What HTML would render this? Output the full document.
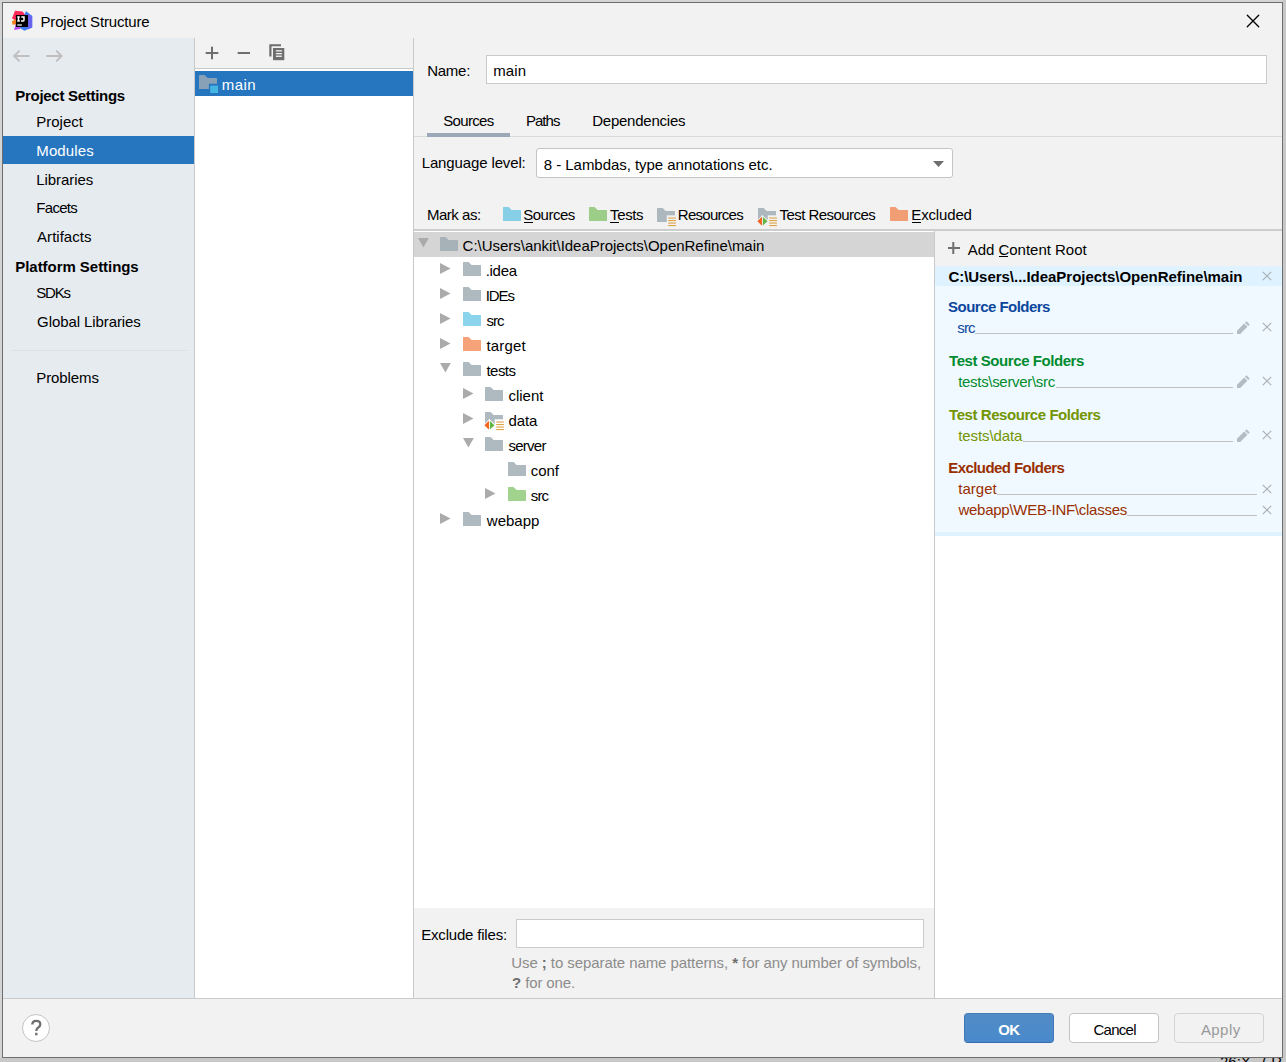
<!DOCTYPE html>
<html><head><meta charset="utf-8">
<style>
html,body{margin:0;padding:0;width:1286px;height:1062px;overflow:hidden;background:#d2d2d2;}
body{position:relative;font-family:"Liberation Sans",sans-serif;font-size:15px;}
.a{position:absolute;box-sizing:border-box;}
.t{position:absolute;white-space:nowrap;line-height:20px;font-size:15px;font-family:"Liberation Sans",sans-serif;}
svg{position:absolute;overflow:visible;}
.t b{color:#6e6e6e;}
</style></head><body>
<!-- backdrop -->
<div class="a" style="left:0;top:0;width:1286px;height:1062px;background:#d4d4d4"></div>
<div class="a" style="left:1283px;top:0;width:3px;height:1062px;background:#c8c8c8"></div>
<div class="a" style="left:0;top:1058px;width:1286px;height:4px;background:#c8c8c8"></div>
<div class="a" style="left:1200px;top:1057px;width:83px;height:5px;overflow:hidden"><div class="t" style="left:20px;top:-5px;color:#000;font-size:15px">26:X</div><div class="t" style="left:62px;top:-5px;color:#000;font-size:15px">( RI</div></div>
<!-- window -->
<div class="a" style="left:2px;top:2px;width:1281px;height:1056px;border:1px solid #6e6e6e;background:#f2f2f2"></div>
<!-- sidebar -->
<div class="a" style="left:3px;top:38px;width:191px;height:960px;background:#e6ebf0"></div>
<div class="a" style="left:194px;top:38px;width:1px;height:960px;background:#c9c9c9"></div>
<div class="a" style="left:3px;top:136px;width:191px;height:28px;background:#2675bf"></div>
<div class="a" style="left:12px;top:350px;width:175px;height:1px;background:#dcdfe3"></div>
<!-- middle -->
<div class="a" style="left:195px;top:38px;width:218px;height:30px;background:#f2f2f2"></div>
<div class="a" style="left:195px;top:68px;width:218px;height:1px;background:#c9c9c9"></div>
<div class="a" style="left:195px;top:69px;width:218px;height:929px;background:#fff"></div>
<div class="a" style="left:195px;top:71px;width:218px;height:25px;background:#2675bf"></div>
<div class="a" style="left:413px;top:38px;width:1px;height:960px;background:#c9c9c9"></div>
<!-- bottom separator -->
<div class="a" style="left:3px;top:998px;width:1279px;height:1px;background:#c9c9c9"></div>

<!-- name field -->
<div class="a" style="left:486px;top:55px;width:781px;height:29px;background:#fff;border:1px solid #cbcbcb"></div>
<!-- tabs -->
<div class="a" style="left:414px;top:136px;width:868px;height:1px;background:#d9d9d9"></div>
<div class="a" style="left:427px;top:133px;width:83px;height:4px;background:#9ca7b8"></div>
<!-- combo -->
<div class="a" style="left:536px;top:148px;width:417px;height:30px;background:#fff;border:1px solid #c4c4c4;border-radius:3px"></div>
<svg style="left:933px;top:161px" width="11" height="6"><polygon points="0,0 11,0 5.5,6" fill="#6e6e6e"/></svg>
<!-- mark-as line -->
<div class="a" style="left:414px;top:229px;width:868px;height:2px;background:#cdcdcd"></div>
<!-- tree -->
<div class="a" style="left:414px;top:231px;width:520px;height:677px;background:#fff"></div>
<div class="a" style="left:414px;top:232px;width:520px;height:25px;background:#d5d5d5"></div>
<div class="a" style="left:414px;top:908px;width:520px;height:90px;background:#f2f2f2"></div>
<div class="a" style="left:516px;top:919px;width:408px;height:29px;background:#fff;border:1px solid #cbcbcb"></div>
<div class="a" style="left:934px;top:231px;width:1px;height:767px;background:#c9c9c9"></div>
<!-- right pane -->
<div class="a" style="left:935px;top:231px;width:347px;height:767px;background:#fff"></div>
<div class="a" style="left:935px;top:231px;width:347px;height:35px;background:#f2f2f2"></div>
<div class="a" style="left:935px;top:266px;width:347px;height:20px;background:#def2ff"></div>
<div class="a" style="left:935px;top:286px;width:347px;height:246px;background:#f0f9ff"></div>
<div class="a" style="left:935px;top:532px;width:347px;height:4px;background:#def2ff"></div>

<!-- buttons -->
<div class="a" style="left:22px;top:1014px;width:28px;height:28px;border-radius:50%;background:#fff;border:1px solid #c4c4c4"></div>
<div class="a" style="left:964px;top:1013px;width:90px;height:30px;border-radius:4px;background:linear-gradient(#528cc7,#4989cc);border:1px solid #4078b5;border-top-color:#487eb8;border-bottom-color:#346dad"></div>
<div class="a" style="left:1069px;top:1013px;width:90px;height:30px;border-radius:4px;background:#fff;border:1px solid #c4c4c4"></div>
<div class="a" style="left:1174px;top:1013px;width:90px;height:30px;border-radius:4px;background:#f2f2f2;border:1px solid #d3d3d3"></div>

<svg style="left:418.3px;top:238px" width="11" height="10" viewBox="0 0 11 10"><polygon points="0,0 10.8,0 5.4,9.5" fill="#ababab"/></svg>
<svg style="left:440.1px;top:237px" width="18" height="14" viewBox="0 0 18 14"><path d="M0,0.6 Q0,0 0.6,0 H5.6 L8.6,3 H17.4 Q18,3 18,3.6 V13.4 Q18,14 17.4,14 H0.6 Q0,14 0,13.4 Z" fill="rgba(154,167,176,0.8)"/></svg>
<svg style="left:440.1px;top:263px" width="11" height="11" viewBox="0 0 11 11"><polygon points="0,0 10.5,5.5 0,11" fill="#ababab"/></svg>
<svg style="left:463.1px;top:262px" width="18" height="14" viewBox="0 0 18 14"><path d="M0,0.6 Q0,0 0.6,0 H5.6 L8.6,3 H17.4 Q18,3 18,3.6 V13.4 Q18,14 17.4,14 H0.6 Q0,14 0,13.4 Z" fill="rgba(154,167,176,0.8)"/></svg>
<svg style="left:440.1px;top:288px" width="11" height="11" viewBox="0 0 11 11"><polygon points="0,0 10.5,5.5 0,11" fill="#ababab"/></svg>
<svg style="left:463.1px;top:287px" width="18" height="14" viewBox="0 0 18 14"><path d="M0,0.6 Q0,0 0.6,0 H5.6 L8.6,3 H17.4 Q18,3 18,3.6 V13.4 Q18,14 17.4,14 H0.6 Q0,14 0,13.4 Z" fill="rgba(154,167,176,0.8)"/></svg>
<svg style="left:440.1px;top:313px" width="11" height="11" viewBox="0 0 11 11"><polygon points="0,0 10.5,5.5 0,11" fill="#ababab"/></svg>
<svg style="left:463.1px;top:312px" width="18" height="14" viewBox="0 0 18 14"><path d="M0,0.6 Q0,0 0.6,0 H5.6 L8.6,3 H17.4 Q18,3 18,3.6 V13.4 Q18,14 17.4,14 H0.6 Q0,14 0,13.4 Z" fill="rgba(64,182,224,0.6)"/></svg>
<svg style="left:440.1px;top:338px" width="11" height="11" viewBox="0 0 11 11"><polygon points="0,0 10.5,5.5 0,11" fill="#ababab"/></svg>
<svg style="left:463.1px;top:337px" width="18" height="14" viewBox="0 0 18 14"><path d="M0,0.6 Q0,0 0.6,0 H5.6 L8.6,3 H17.4 Q18,3 18,3.6 V13.4 Q18,14 17.4,14 H0.6 Q0,14 0,13.4 Z" fill="rgba(242,101,34,0.6)"/></svg>
<svg style="left:440.4px;top:363px" width="11" height="10" viewBox="0 0 11 10"><polygon points="0,0 10.8,0 5.4,9.5" fill="#ababab"/></svg>
<svg style="left:463.1px;top:362px" width="18" height="14" viewBox="0 0 18 14"><path d="M0,0.6 Q0,0 0.6,0 H5.6 L8.6,3 H17.4 Q18,3 18,3.6 V13.4 Q18,14 17.4,14 H0.6 Q0,14 0,13.4 Z" fill="rgba(154,167,176,0.8)"/></svg>
<svg style="left:463px;top:388px" width="11" height="11" viewBox="0 0 11 11"><polygon points="0,0 10.5,5.5 0,11" fill="#ababab"/></svg>
<svg style="left:485.1px;top:387px" width="18" height="14" viewBox="0 0 18 14"><path d="M0,0.6 Q0,0 0.6,0 H5.6 L8.6,3 H17.4 Q18,3 18,3.6 V13.4 Q18,14 17.4,14 H0.6 Q0,14 0,13.4 Z" fill="rgba(154,167,176,0.8)"/></svg>
<svg style="left:463px;top:413px" width="11" height="11" viewBox="0 0 11 11"><polygon points="0,0 10.5,5.5 0,11" fill="#ababab"/></svg>
<svg style="left:485.1px;top:412px" width="22" height="20" viewBox="0 0 22 20"><path d="M0,0.6 Q0,0 0.6,0 H5.6 L8.6,3 H17.4 Q18,3 18,3.6 V13.4 Q18,14 17.4,14 H0.6 Q0,14 0,13.4 Z" fill="rgba(154,167,176,0.8)"/><rect x="9.7" y="7.3" width="12" height="13" fill="#fff"/><polygon points="-0.4,13.25 3.9,9.1 3.9,17.4" fill="#f26522" stroke="#fff" stroke-width="2" paint-order="stroke" stroke-linejoin="miter"/><polygon points="4.9,9.1 9.5,13.25 4.9,17.4" fill="#62b543" stroke="#fff" stroke-width="2" paint-order="stroke"/><polygon points="-0.4,13.25 3.9,9.1 3.9,17.4" fill="#f26522"/><rect x="11.2" y="9.5" width="7.7" height="1.1" fill="#dea448"/><rect x="11.2" y="12.0" width="7.7" height="1.1" fill="#dea448"/><rect x="11.2" y="14.5" width="7.7" height="1.1" fill="#dea448"/><rect x="11.2" y="17.0" width="7.7" height="1.1" fill="#dea448"/></svg>
<svg style="left:463px;top:438px" width="11" height="10" viewBox="0 0 11 10"><polygon points="0,0 10.8,0 5.4,9.5" fill="#ababab"/></svg>
<svg style="left:485.1px;top:437px" width="18" height="14" viewBox="0 0 18 14"><path d="M0,0.6 Q0,0 0.6,0 H5.6 L8.6,3 H17.4 Q18,3 18,3.6 V13.4 Q18,14 17.4,14 H0.6 Q0,14 0,13.4 Z" fill="rgba(154,167,176,0.8)"/></svg>
<svg style="left:508px;top:462px" width="18" height="14" viewBox="0 0 18 14"><path d="M0,0.6 Q0,0 0.6,0 H5.6 L8.6,3 H17.4 Q18,3 18,3.6 V13.4 Q18,14 17.4,14 H0.6 Q0,14 0,13.4 Z" fill="rgba(154,167,176,0.8)"/></svg>
<svg style="left:485.3px;top:488px" width="11" height="11" viewBox="0 0 11 11"><polygon points="0,0 10.5,5.5 0,11" fill="#ababab"/></svg>
<svg style="left:508px;top:487px" width="18" height="14" viewBox="0 0 18 14"><path d="M0,0.6 Q0,0 0.6,0 H5.6 L8.6,3 H17.4 Q18,3 18,3.6 V13.4 Q18,14 17.4,14 H0.6 Q0,14 0,13.4 Z" fill="rgba(98,181,67,0.6)"/></svg>
<svg style="left:440.1px;top:513px" width="11" height="11" viewBox="0 0 11 11"><polygon points="0,0 10.5,5.5 0,11" fill="#ababab"/></svg>
<svg style="left:463.1px;top:512px" width="18" height="14" viewBox="0 0 18 14"><path d="M0,0.6 Q0,0 0.6,0 H5.6 L8.6,3 H17.4 Q18,3 18,3.6 V13.4 Q18,14 17.4,14 H0.6 Q0,14 0,13.4 Z" fill="rgba(154,167,176,0.8)"/></svg>
<svg style="left:503px;top:207px" width="18" height="14" viewBox="0 0 18 14"><path d="M0,0.6 Q0,0 0.6,0 H5.6 L8.6,3 H17.4 Q18,3 18,3.6 V13.4 Q18,14 17.4,14 H0.6 Q0,14 0,13.4 Z" fill="rgba(64,182,224,0.6)"/></svg>
<svg style="left:589px;top:207px" width="18" height="14" viewBox="0 0 18 14"><path d="M0,0.6 Q0,0 0.6,0 H5.6 L8.6,3 H17.4 Q18,3 18,3.6 V13.4 Q18,14 17.4,14 H0.6 Q0,14 0,13.4 Z" fill="rgba(98,181,67,0.6)"/></svg>
<svg style="left:657px;top:207.5px" width="22" height="20" viewBox="0 0 22 20"><path d="M0,0.6 Q0,0 0.6,0 H5.6 L8.6,3 H17.4 Q18,3 18,3.6 V13.4 Q18,14 17.4,14 H0.6 Q0,14 0,13.4 Z" fill="rgba(154,167,176,0.8)"/><rect x="9.7" y="7.3" width="12" height="13" fill="#f2f2f2"/><rect x="11.2" y="9.5" width="7.7" height="1.1" fill="#dea448"/><rect x="11.2" y="12.0" width="7.7" height="1.1" fill="#dea448"/><rect x="11.2" y="14.5" width="7.7" height="1.1" fill="#dea448"/><rect x="11.2" y="17.0" width="7.7" height="1.1" fill="#dea448"/></svg>
<svg style="left:758px;top:207.5px" width="22" height="20" viewBox="0 0 22 20"><path d="M0,0.6 Q0,0 0.6,0 H5.6 L8.6,3 H17.4 Q18,3 18,3.6 V13.4 Q18,14 17.4,14 H0.6 Q0,14 0,13.4 Z" fill="rgba(154,167,176,0.8)"/><rect x="9.7" y="7.3" width="12" height="13" fill="#f2f2f2"/><polygon points="-0.4,13.25 3.9,9.1 3.9,17.4" fill="#f26522" stroke="#f2f2f2" stroke-width="2" paint-order="stroke" stroke-linejoin="miter"/><polygon points="4.9,9.1 9.5,13.25 4.9,17.4" fill="#62b543" stroke="#f2f2f2" stroke-width="2" paint-order="stroke"/><polygon points="-0.4,13.25 3.9,9.1 3.9,17.4" fill="#f26522"/><rect x="11.2" y="9.5" width="7.7" height="1.1" fill="#dea448"/><rect x="11.2" y="12.0" width="7.7" height="1.1" fill="#dea448"/><rect x="11.2" y="14.5" width="7.7" height="1.1" fill="#dea448"/><rect x="11.2" y="17.0" width="7.7" height="1.1" fill="#dea448"/></svg>
<svg style="left:890px;top:207px" width="18" height="14" viewBox="0 0 18 14"><path d="M0,0.6 Q0,0 0.6,0 H5.6 L8.6,3 H17.4 Q18,3 18,3.6 V13.4 Q18,14 17.4,14 H0.6 Q0,14 0,13.4 Z" fill="rgba(242,101,34,0.6)"/></svg>
<div class="a" style="left:524px;top:222px;width:9px;height:1px;background:#000"></div>
<div class="a" style="left:610px;top:222px;width:9px;height:1px;background:#000"></div>
<div class="a" style="left:912px;top:222px;width:9px;height:1px;background:#000"></div>
<div class="a" style="left:999px;top:256px;width:9px;height:1px;background:#000"></div>
<svg style="left:199px;top:75px" width="20" height="19" viewBox="0 0 20 19"><path d="M0,0.6 Q0,0 0.6,0 H5.6 L8.6,3 H17.4 Q18,3 18,3.6 V8.8 H9.9 V14 H0.6 Q0,14 0,13.4 Z" fill="#88a1b6"/><rect x="11.2" y="10.6" width="7.8" height="7.4" fill="#45b5e2"/></svg>
<svg style="left:205px;top:46px" width="14" height="14" viewBox="0 0 14 14"><rect x="6" y="0.7" width="2" height="12.6" fill="#6e6e6e"/><rect x="0.7" y="6" width="12.6" height="2" fill="#6e6e6e"/></svg>
<svg style="left:237px;top:46px" width="14" height="14" viewBox="0 0 14 14"><rect x="0.7" y="6" width="12.3" height="2" fill="#6e6e6e"/></svg>
<svg style="left:268px;top:43px" width="18" height="19" viewBox="0 0 18 19"><path d="M1.3,1.2 H13 V3.3 H3.5 V13.5 H1.3 Z" fill="#6e6e6e"/><rect x="5" y="5" width="11.3" height="12.2" fill="#6e6e6e"/><rect x="7.9" y="7.2" width="6" height="1.3" fill="#f2f2f2"/><rect x="7.9" y="10" width="6" height="1.3" fill="#f2f2f2"/><rect x="7.9" y="12.6" width="6" height="1.3" fill="#f2f2f2"/></svg>
<svg style="left:12px;top:48px" width="20" height="16" viewBox="0 0 20 16"><path d="M2.2,8 H17.5 M7.6,2.6 L2.2,8 L7.6,13.4" stroke="#bfbfbf" stroke-width="2" fill="none"/></svg>
<svg style="left:45px;top:48px" width="20" height="16" viewBox="0 0 20 16"><path d="M1.3,8 H16.6 M11.2,2.6 L16.6,8 L11.2,13.4" stroke="#bfbfbf" stroke-width="2" fill="none"/></svg>
<svg style="left:1246px;top:14px" width="14" height="14" viewBox="0 0 14 14"><path d="M1.3,1.3 L12.7,12.7 M12.7,1.3 L1.3,12.7" stroke="#000" stroke-width="1.3" stroke-linecap="round" fill="none"/></svg>
<svg style="left:947px;top:241px" width="14" height="14" viewBox="0 0 14 14"><rect x="5.3" y="1" width="2" height="12" fill="#6e6e6e"/><rect x="1" y="6" width="12" height="2" fill="#6e6e6e"/></svg>
<svg style="left:1262px;top:271px" width="10" height="10" viewBox="0 0 10 10"><path d="M0.8,0.8 L9.2,9.2 M9.2,0.8 L0.8,9.2" stroke="#a9b0b5" stroke-width="1.15" fill="none"/></svg>
<svg style="left:1237px;top:320.5px" width="13" height="13" viewBox="0 0 13 13"><path d="M9.5,0.3 L12.7,3.5 L11.2,5 L8,1.8 Z M7.2,2.6 L10.4,5.8 L3.2,13 L0,13 L0,9.8 Z" fill="#b3bcc3"/></svg>
<svg style="left:1262px;top:322px" width="10" height="10" viewBox="0 0 10 10"><path d="M0.8,0.8 L9.2,9.2 M9.2,0.8 L0.8,9.2" stroke="#a9b0b5" stroke-width="1.15" fill="none"/></svg>
<svg style="left:1237px;top:374.5px" width="13" height="13" viewBox="0 0 13 13"><path d="M9.5,0.3 L12.7,3.5 L11.2,5 L8,1.8 Z M7.2,2.6 L10.4,5.8 L3.2,13 L0,13 L0,9.8 Z" fill="#b3bcc3"/></svg>
<svg style="left:1262px;top:376px" width="10" height="10" viewBox="0 0 10 10"><path d="M0.8,0.8 L9.2,9.2 M9.2,0.8 L0.8,9.2" stroke="#a9b0b5" stroke-width="1.15" fill="none"/></svg>
<svg style="left:1237px;top:428.5px" width="13" height="13" viewBox="0 0 13 13"><path d="M9.5,0.3 L12.7,3.5 L11.2,5 L8,1.8 Z M7.2,2.6 L10.4,5.8 L3.2,13 L0,13 L0,9.8 Z" fill="#b3bcc3"/></svg>
<svg style="left:1262px;top:430px" width="10" height="10" viewBox="0 0 10 10"><path d="M0.8,0.8 L9.2,9.2 M9.2,0.8 L0.8,9.2" stroke="#a9b0b5" stroke-width="1.15" fill="none"/></svg>
<svg style="left:1262px;top:484px" width="10" height="10" viewBox="0 0 10 10"><path d="M0.8,0.8 L9.2,9.2 M9.2,0.8 L0.8,9.2" stroke="#a9b0b5" stroke-width="1.15" fill="none"/></svg>
<svg style="left:1262px;top:505px" width="10" height="10" viewBox="0 0 10 10"><path d="M0.8,0.8 L9.2,9.2 M9.2,0.8 L0.8,9.2" stroke="#a9b0b5" stroke-width="1.15" fill="none"/></svg>
<div class="a" style="left:975px;top:333px;width:258px;height:1px;background:#c2c2c2"></div>
<div class="a" style="left:1056px;top:387px;width:177px;height:1px;background:#c2c2c2"></div>
<div class="a" style="left:1023px;top:441px;width:210px;height:1px;background:#c2c2c2"></div>
<div class="a" style="left:997px;top:494px;width:260px;height:1px;background:#c2c2c2"></div>
<div class="a" style="left:1127px;top:515px;width:130px;height:1px;background:#c2c2c2"></div>
<svg style="left:30px;top:1019px" width="14" height="18" viewBox="0 0 14 18"><path d="M2.3,5.6 Q2.3,1.9 6.3,1.9 Q10.3,1.9 10.3,5.3 Q10.3,7.4 8,8.7 Q6.3,9.7 6.3,11.9" stroke="#6e6e6e" stroke-width="2.3" fill="none"/><rect x="5.1" y="13.8" width="2.4" height="2.5" fill="#6e6e6e"/></svg>
<svg style="left:11px;top:10px" width="22" height="22" viewBox="0 0 22 22"><polygon points="1,8.5 4,0.8 11.5,1.5 14,4.5 9,9.5 4,10" fill="#fe2857"/>
<polygon points="0.9,11.2 4.5,9.2 5.5,14.2 1.5,14.8" fill="#fc801d"/>
<polygon points="3,20 4.9,14 10.5,17 9,19" fill="#b74af7"/>
<polygon points="9,18 13.5,4.5 14.9,1 21.2,5.9 21.2,17.5 13.3,20.8" fill="#3d7cf5"/>
<polygon points="17,4 21.2,5.9 21.2,17.5 17,19.3" fill="#6a63f0"/>
<rect x="4.9" y="5" width="12.1" height="12" fill="#000"/>
<rect x="6.3" y="14.4" width="4.6" height="1.2" fill="#fff"/>
<path d="M6.2,6.9 H8.8 M7.5,6.9 V11 M6.2,11 H8.8 M10.3,6.9 H13 V10 Q13,11.1 11.8,11.1 H10" stroke="#fff" stroke-width="1.5" fill="none"/></svg>
<div class="t" style="left:40.5px;top:12px;color:#000;letter-spacing:-0.159px">Project Structure</div>
<div class="t" style="left:15.3px;top:86px;color:#000;letter-spacing:-0.289px;font-weight:bold">Project Settings</div>
<div class="t" style="left:36.3px;top:112px;color:#000;letter-spacing:-0.017px">Project</div>
<div class="t" style="left:36.3px;top:141px;color:#fff;letter-spacing:0.110px">Modules</div>
<div class="t" style="left:36.3px;top:170px;color:#000;letter-spacing:-0.085px">Libraries</div>
<div class="t" style="left:36.3px;top:198px;color:#000;letter-spacing:-0.696px">Facets</div>
<div class="t" style="left:37.1px;top:227px;color:#000;letter-spacing:0.017px">Artifacts</div>
<div class="t" style="left:15.3px;top:257px;color:#000;letter-spacing:-0.048px;font-weight:bold">Platform Settings</div>
<div class="t" style="left:36.3px;top:283px;color:#000;letter-spacing:-1.233px">SDKs</div>
<div class="t" style="left:37.1px;top:312px;color:#000;letter-spacing:-0.085px">Global Libraries</div>
<div class="t" style="left:36.3px;top:368px;color:#000;letter-spacing:-0.100px">Problems</div>
<div class="t" style="left:221.8px;top:75px;color:#fff;letter-spacing:0.393px">main</div>
<div class="t" style="left:427.2px;top:61px;color:#000;letter-spacing:-0.260px">Name:</div>
<div class="t" style="left:493.2px;top:61px;color:#000;letter-spacing:0.153px">main</div>
<div class="t" style="left:443.3px;top:111px;color:#000;letter-spacing:-0.690px">Sources</div>
<div class="t" style="left:525.9px;top:111px;color:#000;letter-spacing:-0.965px">Paths</div>
<div class="t" style="left:592.2px;top:111px;color:#000;letter-spacing:-0.233px">Dependencies</div>
<div class="t" style="left:421.7px;top:153px;color:#000;letter-spacing:-0.130px">Language level:</div>
<div class="t" style="left:543.8px;top:155px;color:#000;letter-spacing:-0.042px">8 - Lambdas, type annotations etc.</div>
<div class="t" style="left:426.9px;top:205px;color:#000;letter-spacing:-0.454px">Mark as:</div>
<div class="t" style="left:523.3px;top:205px;color:#000;letter-spacing:-0.520px">Sources</div>
<div class="t" style="left:610.1px;top:205px;color:#000;letter-spacing:-0.375px">Tests</div>
<div class="t" style="left:677.8px;top:205px;color:#000;letter-spacing:-0.720px">Resources</div>
<div class="t" style="left:779.6px;top:205px;color:#000;letter-spacing:-0.555px">Test Resources</div>
<div class="t" style="left:911.3px;top:205px;color:#000;letter-spacing:-0.149px">Excluded</div>
<div class="t" style="left:462.6px;top:236px;color:#000;letter-spacing:-0.021px">C:\Users\ankit\IdeaProjects\OpenRefine\main</div>
<div class="t" style="left:485.7px;top:261px;color:#000;letter-spacing:-0.300px">.idea</div>
<div class="t" style="left:485.7px;top:286px;color:#000;letter-spacing:-1.040px">IDEs</div>
<div class="t" style="left:486.5px;top:311px;color:#000;letter-spacing:-1.060px">src</div>
<div class="t" style="left:486.5px;top:336px;color:#000;letter-spacing:0.144px">target</div>
<div class="t" style="left:486.5px;top:361px;color:#000;letter-spacing:-0.550px">tests</div>
<div class="t" style="left:508.4px;top:386px;color:#000;letter-spacing:0.016px">client</div>
<div class="t" style="left:508.4px;top:411px;color:#000;letter-spacing:-0.067px">data</div>
<div class="t" style="left:508.4px;top:436px;color:#000;letter-spacing:-0.728px">server</div>
<div class="t" style="left:530.8px;top:461px;color:#000;letter-spacing:-0.047px">conf</div>
<div class="t" style="left:530.8px;top:486px;color:#000;letter-spacing:-0.880px">src</div>
<div class="t" style="left:486.8px;top:511px;color:#000;letter-spacing:0.020px">webapp</div>
<div class="t" style="left:967.7px;top:240px;color:#000;letter-spacing:-0.019px">Add Content Root</div>
<div class="t" style="left:948.4px;top:267px;color:#000;letter-spacing:-0.026px;font-weight:bold">C:\Users\...IdeaProjects\OpenRefine\main</div>
<div class="t" style="left:948.1px;top:297px;color:#0b479d;letter-spacing:-0.532px;font-weight:bold">Source Folders</div>
<div class="t" style="left:957.3px;top:318px;color:#0b479d;letter-spacing:-0.840px">src</div>
<div class="t" style="left:949.1px;top:351px;color:#008C2E;letter-spacing:-0.437px;font-weight:bold">Test Source Folders</div>
<div class="t" style="left:958.2px;top:372px;color:#008C2E;letter-spacing:-0.309px">tests\server\src</div>
<div class="t" style="left:949.1px;top:405px;color:#739503;letter-spacing:-0.439px;font-weight:bold">Test Resource Folders</div>
<div class="t" style="left:958.2px;top:426px;color:#739503;letter-spacing:-0.093px">tests\data</div>
<div class="t" style="left:948.3px;top:458px;color:#992E00;letter-spacing:-0.571px;font-weight:bold">Excluded Folders</div>
<div class="t" style="left:958.2px;top:479px;color:#992E00;letter-spacing:0.044px">target</div>
<div class="t" style="left:958.4px;top:500px;color:#992E00;letter-spacing:-0.254px">webapp\WEB-INF\classes</div>
<div class="t" style="left:421.2px;top:925px;color:#000;letter-spacing:-0.185px">Exclude files:</div>
<div class="t" style="left:511.3px;top:953px;color:#8c8c8c;letter-spacing:-0.077px">Use <b>;</b> to separate name patterns, <b>*</b> for any number of symbols,</div>
<div class="t" style="left:512.1px;top:973px;color:#8c8c8c;letter-spacing:-0.133px"><b>?</b> for one.</div>
<div class="t" style="left:998.3px;top:1020px;color:#fff;letter-spacing:-0.760px;font-weight:bold">OK</div>
<div class="t" style="left:1093.5px;top:1020px;color:#000;letter-spacing:-0.740px">Cancel</div>
<div class="t" style="left:1200.9px;top:1020px;color:#9a9a9a;letter-spacing:0.435px">Apply</div>
</body></html>
